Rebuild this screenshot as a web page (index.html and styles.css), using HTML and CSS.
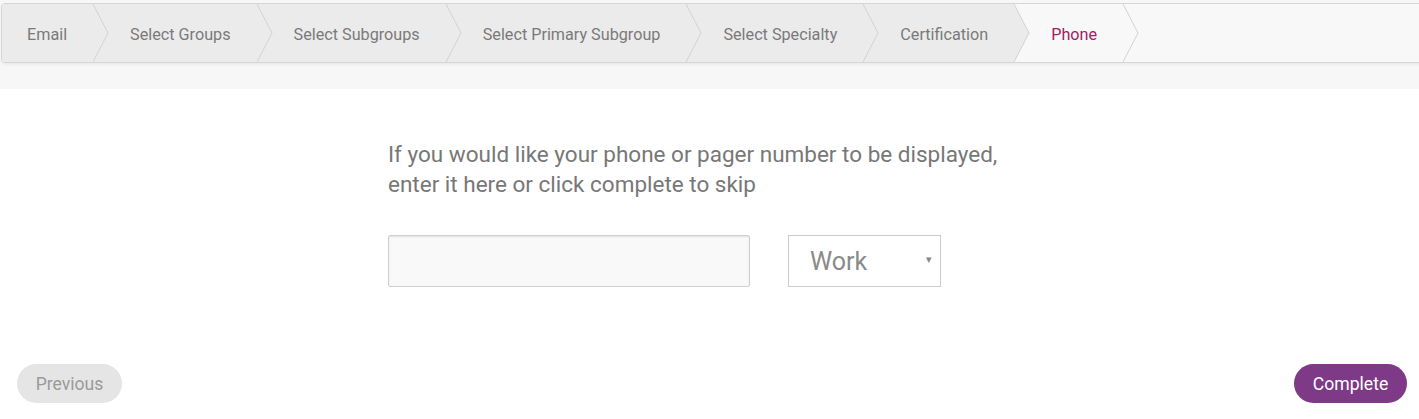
FILE: index.html
```html
<!DOCTYPE html>
<html lang="en">
<head>
<meta charset="utf-8">
<title>Phone</title>
<link rel="stylesheet" href="styles.css">
</head>
<body>
<header class="band">
  <ol class="crumbs">
    <li class="crumb done first"><span>Email</span><svg class="arrow" viewBox="0 0 17 58" width="17" height="58"><polygon points="0,0 15,29 0,58" class="fill"/><polyline points="0,0 15,29 0,58" class="line"/></svg></li>
    <li class="crumb done"><span>Select Groups</span><svg class="arrow" viewBox="0 0 17 58" width="17" height="58"><polygon points="0,0 15,29 0,58" class="fill"/><polyline points="0,0 15,29 0,58" class="line"/></svg></li>
    <li class="crumb done"><span>Select Subgroups</span><svg class="arrow" viewBox="0 0 17 58" width="17" height="58"><polygon points="0,0 15,29 0,58" class="fill"/><polyline points="0,0 15,29 0,58" class="line"/></svg></li>
    <li class="crumb done"><span>Select Primary Subgroup</span><svg class="arrow" viewBox="0 0 17 58" width="17" height="58"><polygon points="0,0 15,29 0,58" class="fill"/><polyline points="0,0 15,29 0,58" class="line"/></svg></li>
    <li class="crumb done"><span>Select Specialty</span><svg class="arrow" viewBox="0 0 17 58" width="17" height="58"><polygon points="0,0 15,29 0,58" class="fill"/><polyline points="0,0 15,29 0,58" class="line"/></svg></li>
    <li class="crumb done"><span>Certification</span><svg class="arrow" viewBox="0 0 17 58" width="17" height="58"><polygon points="0,0 15,29 0,58" class="fill"/><polyline points="0,0 15,29 0,58" class="line"/></svg></li>
    <li class="crumb current"><span>Phone</span><svg class="arrow" viewBox="0 0 17 58" width="17" height="58"><polygon points="0,0 15,29 0,58" class="fill"/><polyline points="0,0 15,29 0,58" class="line"/></svg></li>
  </ol>
</header>
<main class="content">
  <p class="prompt">If you would like your phone or pager number to be displayed,<br>enter it here or click complete to skip</p>
  <div class="fields">
    <input class="phone-input" type="text" aria-label="Phone number">
    <div class="type-select">
      <span class="type-value">Work</span>
      <span class="type-caret">&#9662;</span>
    </div>
  </div>
</main>
<footer class="actions">
  <button class="btn btn-prev" type="button">Previous</button>
  <button class="btn btn-complete" type="button">Complete</button>
</footer>
</body>
</html>
```
FILE: styles.css
```css
html, body {
  margin: 0;
  padding: 0;
  background: #ffffff;
  overflow: hidden;
}
body {
  width: 1419px;
  height: 419px;
  font-family: Roboto, "Liberation Sans", Arial, sans-serif;
  color: #777777;
  display: flex;
  flex-direction: column;
}
.band {
  background: #f7f7f7;
  height: 89px;
  padding-top: 3px;
  box-sizing: border-box;
}
.crumbs {
  list-style: none;
  margin: 0 0 0 1px;
  padding: 0;
  width: 1430px;
  height: 60px;
  box-sizing: border-box;
  border: 1px solid #d6d6d6;
  border-radius: 4px 0 0 4px;
  background: #f8f8f8;
  box-shadow: 0 2px 3px rgba(0, 0, 0, 0.05);
  display: flex;
  overflow: hidden;
}
.crumb {
  position: relative;
  display: flex;
  align-items: center;
  height: 58px;
  padding: 2px 26px 0 37px;
  box-sizing: border-box;
  font-size: 16.2px;
  color: #7a7a7a;
  white-space: nowrap;
}
.crumb.first {
  padding-left: 25px;
}
.crumb.done {
  background: #ebebeb;
}
.crumb.current {
  background: #f8f8f8;
  color: #a3205f;
}
.crumb:nth-child(1) { z-index: 7; }
.crumb:nth-child(2) { z-index: 6; }
.crumb:nth-child(3) { z-index: 5; }
.crumb:nth-child(4) { z-index: 4; }
.crumb:nth-child(5) { z-index: 3; }
.crumb:nth-child(6) { z-index: 2; }
.crumb:nth-child(7) { z-index: 1; }
.arrow {
  position: absolute;
  top: 0;
  left: 100%;
  display: block;
}
.arrow .fill {
  fill: #ebebeb;
  stroke: none;
}
.crumb.current .arrow .fill {
  fill: #f8f8f8;
}
.arrow .line {
  fill: none;
  stroke: #d2d2d2;
  stroke-width: 1;
}
.content {
  width: 643px;
  margin: 0 auto;
  padding-top: 50px;
  flex: 1;
}
.prompt {
  margin: 0;
  font-size: 22.5px;
  line-height: 30px;
  color: #777777;
}
.fields {
  display: flex;
  gap: 38px;
  margin-top: 36px;
}
.phone-input {
  width: 362px;
  height: 52px;
  box-sizing: border-box;
  border: 1px solid #cfcfcf;
  border-radius: 2px;
  background: #f9f9f9;
  box-shadow: inset 0 1px 2px rgba(0, 0, 0, 0.1);
  margin: 0;
  padding: 0 12px;
  font-family: inherit;
  font-size: 18px;
}
.type-select {
  position: relative;
  width: 153px;
  height: 52px;
  box-sizing: border-box;
  border: 1px solid #cccccc;
  background: #ffffff;
  display: flex;
  align-items: center;
  padding-left: 21px;
}
.type-value {
  font-size: 25px;
  color: #8a8a8a;
}
.type-caret {
  position: absolute;
  right: 8px;
  top: 17px;
  font-size: 11px;
  color: #888888;
}
.actions {
  display: flex;
  justify-content: space-between;
  padding: 0 12px 16px 17px;
}
.btn {
  height: 39px;
  border: none;
  border-radius: 20px;
  font-family: inherit;
  font-size: 17.6px;
  padding: 0;
  margin: 0;
}
.btn-prev {
  background: #e5e5e5;
  color: #9a9a9a;
  width: 105px;
}
.btn-complete {
  background: #7e3987;
  color: #ffffff;
  width: 113px;
}
```
